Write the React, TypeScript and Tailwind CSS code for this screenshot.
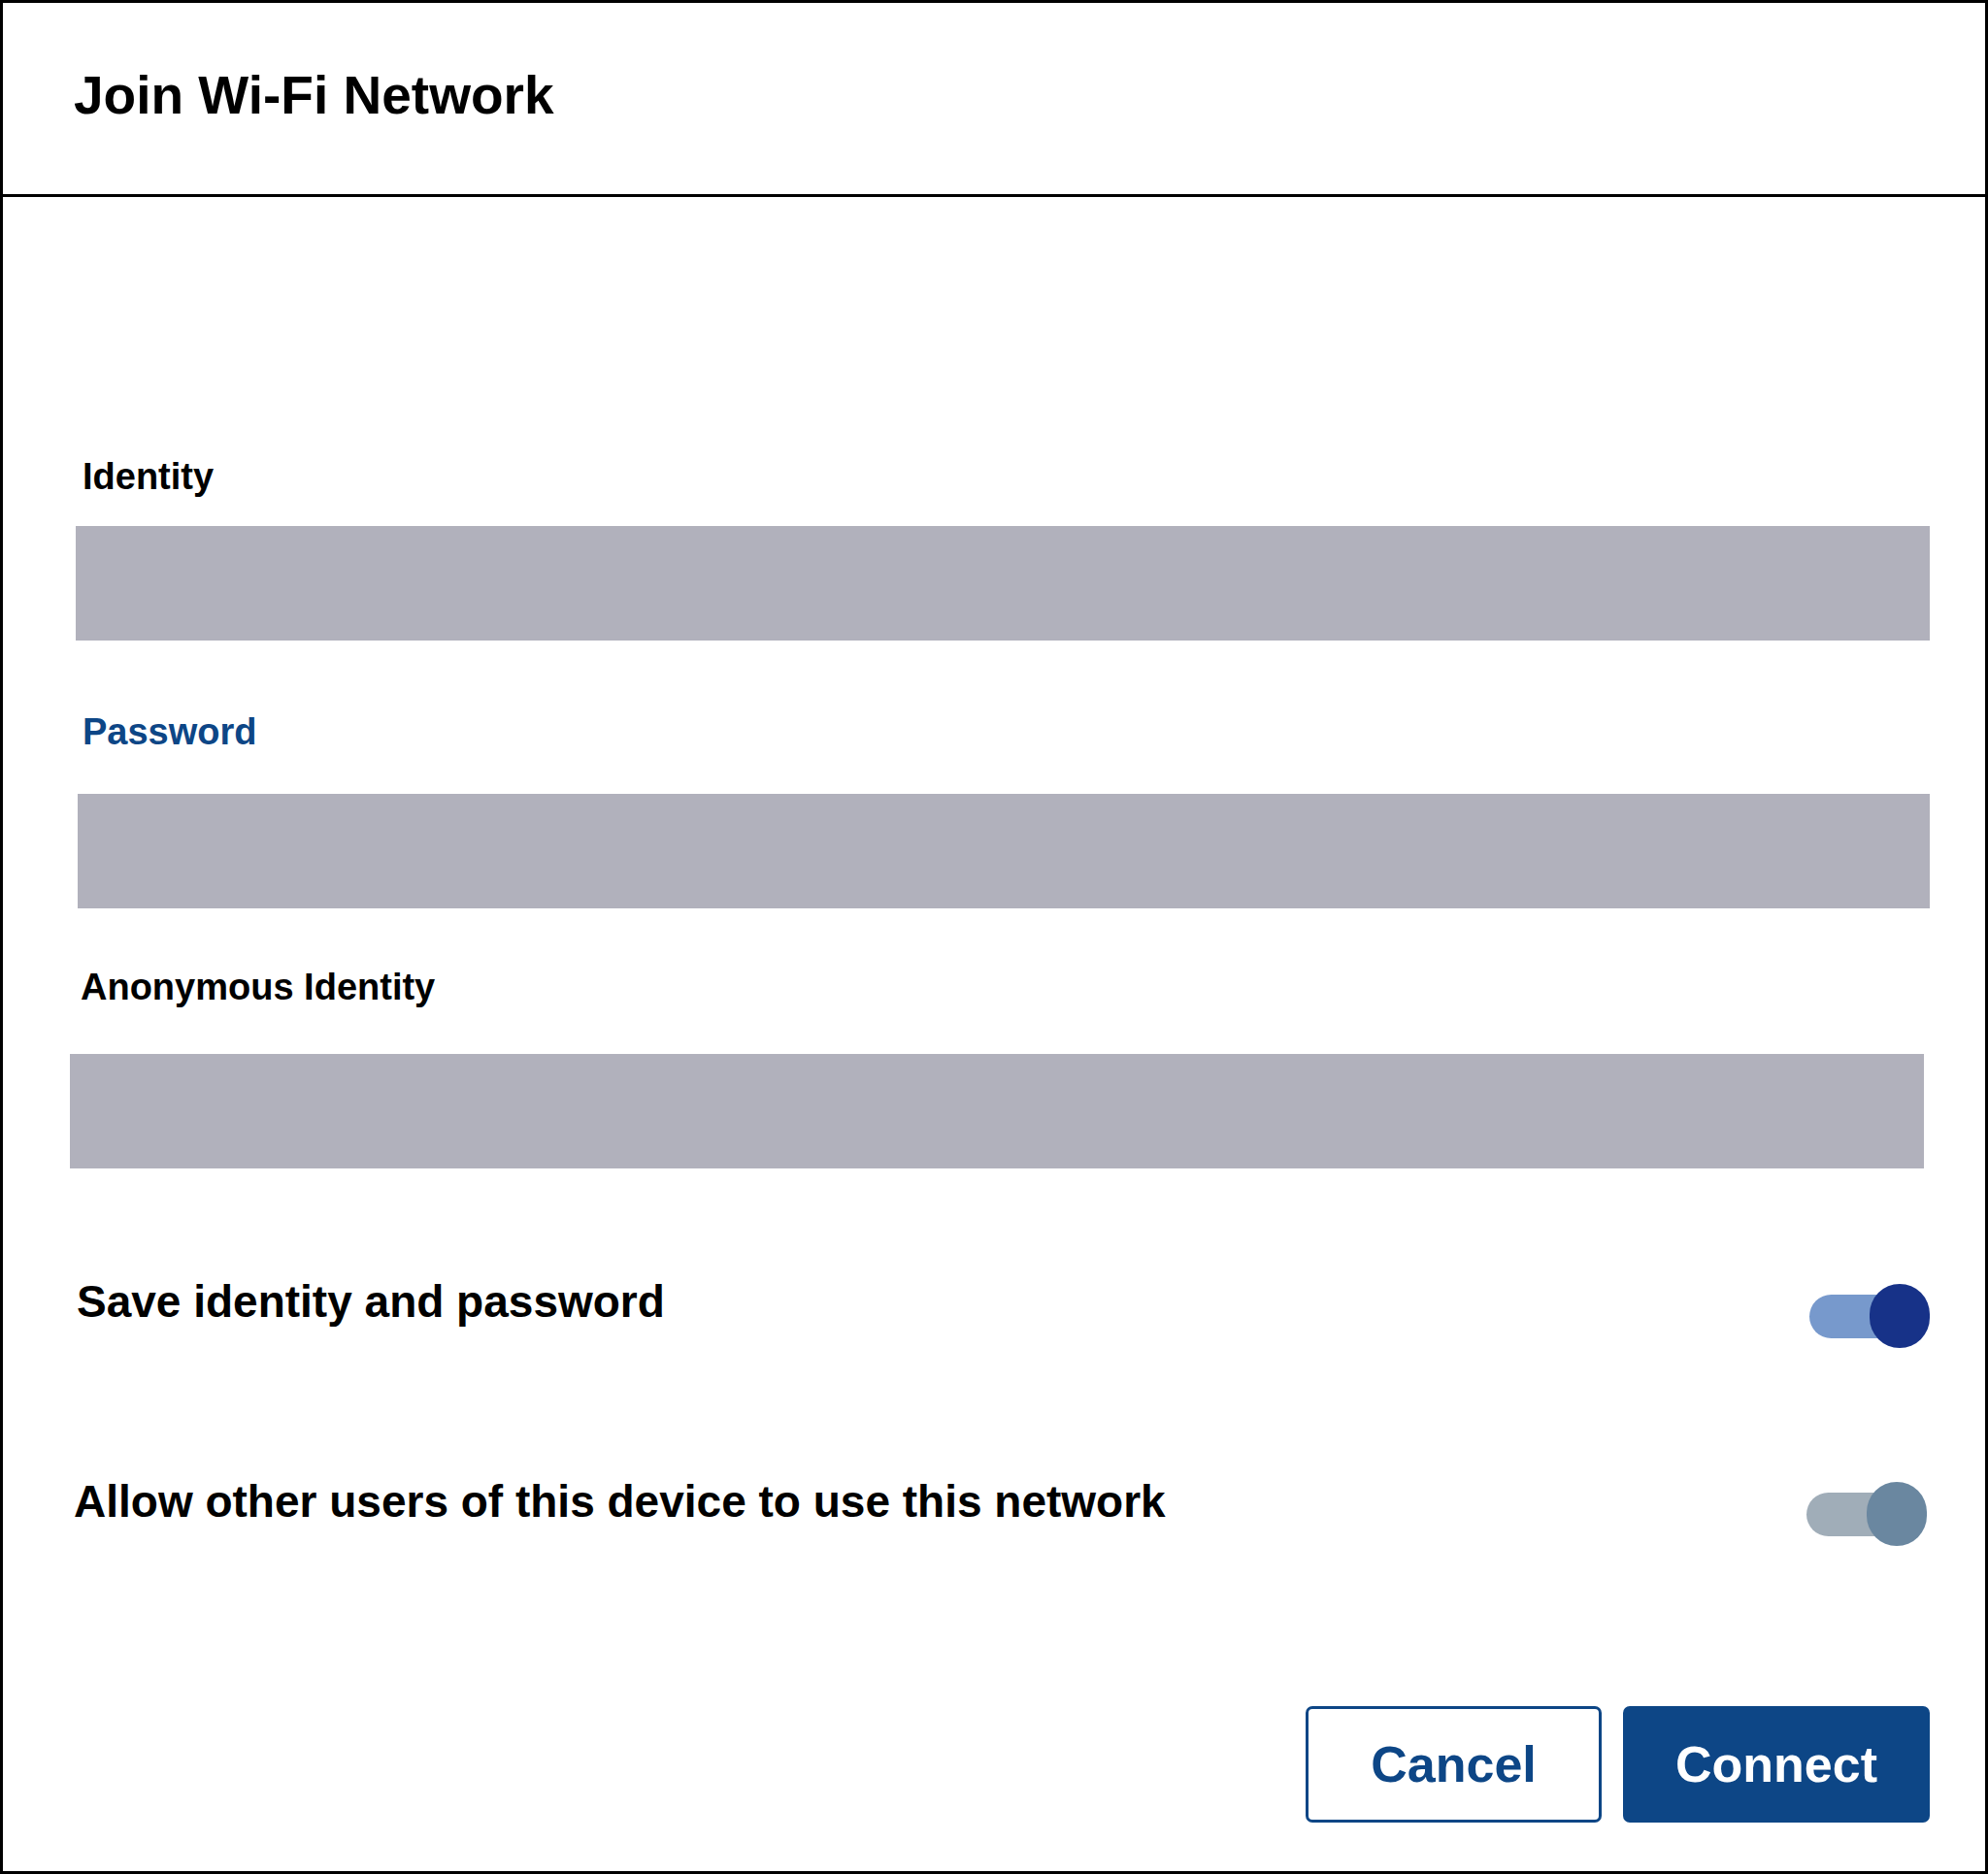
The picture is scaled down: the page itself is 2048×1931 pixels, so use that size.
const font = { fontFamily: '"Liberation Sans", Arial, sans-serif' };

const Toggle = ({ on }: { on: boolean }) => (
  <div className="relative h-[66px] w-[124px]">
    <div
      className={`absolute left-0 top-[11px] h-[45px] w-[104px] rounded-full ${on ? 'bg-[#7799cc]' : 'bg-[#a0adb8]'}`}
    />
    <div
      className={`absolute right-0 top-0 h-[66px] w-[62px] rounded-full ${on ? 'bg-[#173288]' : 'bg-[#6a87a0]'}`}
    />
  </div>
);

export default function App() {
  return (
    <div style={font} className="w-[2048px] h-[1931px] border-[3px] border-black bg-white text-black flex flex-col">
      {/* Header */}
      <div className="h-[200px] border-b-[3px] border-black flex items-center pl-[73px] pb-[6px]">
        <h1 className="text-[55px] font-bold leading-none">Join Wi-Fi Network</h1>
      </div>

      {/* Form */}
      <div className="flex flex-col pr-[57px]">
        <label className="mt-[265px] ml-[82px] text-[38px] font-bold leading-[46px]">Identity</label>
        <div className="mt-[28px] ml-[75px] h-[118px] bg-[#b1b1bc]" />

        <label className="mt-[71px] ml-[82px] text-[38px] font-bold leading-[46px] text-[#0d4686]">Password</label>
        <div className="mt-[41px] ml-[77px] h-[118px] bg-[#b1b1bc]" />

        <label className="mt-[58px] ml-[80px] text-[38px] font-bold leading-[46px]">Anonymous Identity</label>
        <div className="mt-[46px] ml-[69px] -mr-[-6px] h-[118px] bg-[#b1b1bc]" />

        <div className="mt-[117px] ml-[76px] flex items-center justify-between h-[70px]">
          <span className="text-[46px] font-bold mb-[30px]">Save identity and password</span>
          <Toggle on />
        </div>

        <div className="mt-[134px] ml-[73px] flex items-center justify-between h-[70px] pr-[3px]">
          <span className="text-[46px] font-bold mb-[26px]">Allow other users of this device to use this network</span>
          <Toggle on={false} />
        </div>

        <div className="mt-[163px] flex justify-end gap-[22px]">
          <button className="h-[120px] w-[305px] rounded-[7px] border-[3px] border-[#0d4686] text-[52px] font-bold text-[#0d4686]">
            Cancel
          </button>
          <button className="h-[120px] w-[316px] rounded-[7px] bg-[#0d4686] text-[52px] font-bold text-white">
            Connect
          </button>
        </div>
      </div>
    </div>
  );
}
